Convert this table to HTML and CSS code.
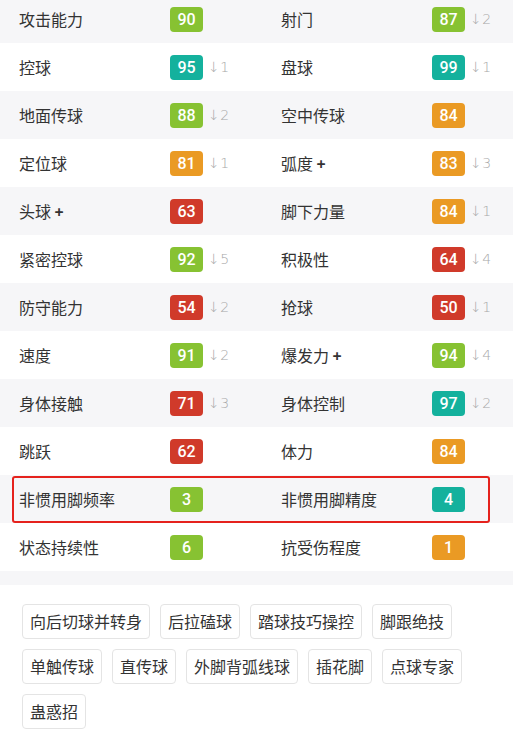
FILE: index.html
```html
<!DOCTYPE html>
<html lang="zh">
<head>
<meta charset="utf-8">
<link rel="stylesheet" href="styles.css">
</head>
<body>
<div class="stats">
  <div class="row grey">
    <div class="cell"><span class="label">攻击能力</span><span class="badge g">90</span></div>
    <div class="cell"><span class="label">射门</span><span class="badge g">87</span><span class="arrow">↓2</span></div>
  </div>
  <div class="row">
    <div class="cell"><span class="label">控球</span><span class="badge t">95</span><span class="arrow">↓1</span></div>
    <div class="cell"><span class="label">盘球</span><span class="badge t">99</span><span class="arrow">↓1</span></div>
  </div>
  <div class="row grey">
    <div class="cell"><span class="label">地面传球</span><span class="badge g">88</span><span class="arrow">↓2</span></div>
    <div class="cell"><span class="label">空中传球</span><span class="badge o">84</span></div>
  </div>
  <div class="row">
    <div class="cell"><span class="label">定位球</span><span class="badge o">81</span><span class="arrow">↓1</span></div>
    <div class="cell"><span class="label">弧度 <b>+</b></span><span class="badge o">83</span><span class="arrow">↓3</span></div>
  </div>
  <div class="row grey">
    <div class="cell"><span class="label">头球 <b>+</b></span><span class="badge r">63</span></div>
    <div class="cell"><span class="label">脚下力量</span><span class="badge o">84</span><span class="arrow">↓1</span></div>
  </div>
  <div class="row">
    <div class="cell"><span class="label">紧密控球</span><span class="badge g">92</span><span class="arrow">↓5</span></div>
    <div class="cell"><span class="label">积极性</span><span class="badge r">64</span><span class="arrow">↓4</span></div>
  </div>
  <div class="row grey">
    <div class="cell"><span class="label">防守能力</span><span class="badge r">54</span><span class="arrow">↓2</span></div>
    <div class="cell"><span class="label">抢球</span><span class="badge r">50</span><span class="arrow">↓1</span></div>
  </div>
  <div class="row">
    <div class="cell"><span class="label">速度</span><span class="badge g">91</span><span class="arrow">↓2</span></div>
    <div class="cell"><span class="label">爆发力 <b>+</b></span><span class="badge g">94</span><span class="arrow">↓4</span></div>
  </div>
  <div class="row grey">
    <div class="cell"><span class="label">身体接触</span><span class="badge r">71</span><span class="arrow">↓3</span></div>
    <div class="cell"><span class="label">身体控制</span><span class="badge t">97</span><span class="arrow">↓2</span></div>
  </div>
  <div class="row">
    <div class="cell"><span class="label">跳跃</span><span class="badge r">62</span></div>
    <div class="cell"><span class="label">体力</span><span class="badge o">84</span></div>
  </div>
  <div class="row grey highlight">
    <div class="cell"><span class="label">非惯用脚频率</span><span class="badge g">3</span></div>
    <div class="cell"><span class="label">非惯用脚精度</span><span class="badge t">4</span></div>
    <div class="box"></div>
  </div>
  <div class="row">
    <div class="cell"><span class="label">状态持续性</span><span class="badge g">6</span></div>
    <div class="cell"><span class="label">抗受伤程度</span><span class="badge o">1</span></div>
  </div>
</div>
<div class="sep"></div>
<div class="tags">
  <span class="tag">向后切球并转身</span>
  <span class="tag">后拉磕球</span>
  <span class="tag">踏球技巧操控</span>
  <span class="tag">脚跟绝技</span>
  <span class="tag">单触传球</span>
  <span class="tag">直传球</span>
  <span class="tag">外脚背弧线球</span>
  <span class="tag">插花脚</span>
  <span class="tag">点球专家</span>
  <span class="tag">蛊惑招</span>
</div>
</body>
</html>
```

FILE: styles.css
```css
html, body {
  margin: 0;
  padding: 0;
  background: #ffffff;
}
body {
  font-family: "Noto Sans CJK SC", "Noto Sans", Roboto, sans-serif;
  color: #333333;
  overflow: hidden;
}
.stats {
  margin-top: -5px;
}
.row {
  display: grid;
  grid-template-columns: 262px 251px;
  height: 48px;
  background: #ffffff;
  position: relative;
}
.row.grey {
  background: #f6f6f8;
}
.cell {
  display: flex;
  align-items: center;
  padding-left: 19px;
}
.label {
  width: 151px;
  flex: none;
  font-size: 16px;
  color: #333333;
}
.label b {
  font-weight: 700;
  font-family: "Noto Sans", sans-serif;
}
.badge {
  width: 33px;
  height: 25px;
  border-radius: 4px;
  color: #ffffff;
  font-family: Roboto, "Noto Sans", sans-serif;
  font-weight: 500;
  font-size: 16px;
  display: flex;
  align-items: center;
  justify-content: center;
  flex: none;
}
.badge.g { background: #87c232; }
.badge.t { background: #14b19d; }
.badge.o { background: #ea9a24; }
.badge.r { background: #d03a2a; }
.arrow {
  margin-left: 5px;
  font-size: 14px;
  letter-spacing: 0.5px;
  color: #a8a8a8;
  font-family: "DejaVu Sans", Roboto, sans-serif;
  font-weight: 300;
}
.box {
  position: absolute;
  left: 12px;
  top: 1px;
  width: 474px;
  height: 43px;
  border: 2px solid #e5221d;
  border-radius: 3px;
}
.sep {
  height: 14px;
  background: #f6f6f8;
}
.tags {
  display: flex;
  flex-wrap: wrap;
  gap: 10px;
  padding: 19px 22px 0 22px;
}
.tag {
  height: 35px;
  box-sizing: border-box;
  border: 1px solid #e4e4e4;
  border-radius: 4px;
  padding: 0 7px;
  font-size: 16px;
  line-height: 33px;
  color: #333333;
}
```
